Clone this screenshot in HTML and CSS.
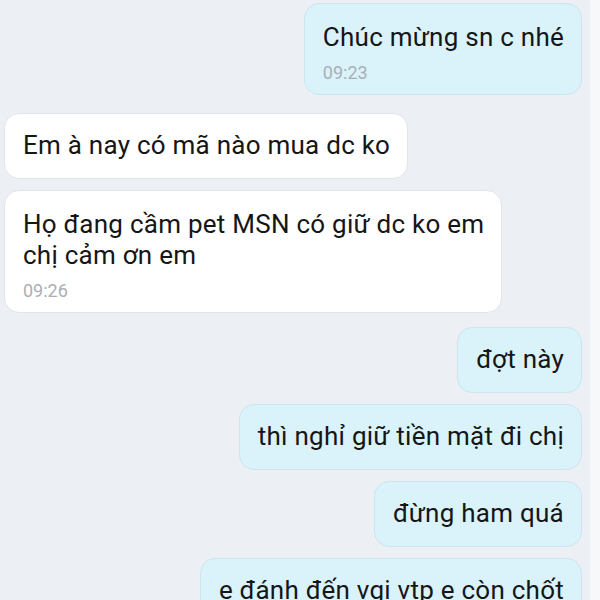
FILE: index.html
```html
<!DOCTYPE html>
<html lang="vi">
<head>
<meta charset="utf-8">
<link rel="stylesheet" href="styles.css">
</head>
<body>
<div class="chat">
  <div class="row out">
    <div class="bubble out">
      <div class="text">Chúc mừng sn c nhé</div>
      <div class="time">09:23</div>
    </div>
  </div>
  <div class="row in gap-l">
    <div class="bubble in single">
      <div class="text">Em à nay có mã nào mua dc ko</div>
    </div>
  </div>
  <div class="row in">
    <div class="bubble in">
      <div class="text">Họ đang cầm pet MSN có giữ dc ko em<br>chị cảm ơn em</div>
      <div class="time">09:26</div>
    </div>
  </div>
  <div class="row out gap-m">
    <div class="bubble out single">
      <div class="text">đợt này</div>
    </div>
  </div>
  <div class="row out">
    <div class="bubble out single">
      <div class="text">thì nghỉ giữ tiền mặt đi chị</div>
    </div>
  </div>
  <div class="row out">
    <div class="bubble out single">
      <div class="text">đừng ham quá</div>
    </div>
  </div>
  <div class="row out">
    <div class="bubble out single">
      <div class="text">e đánh đến vgi vtp e còn chốt</div>
    </div>
  </div>
</div>
</body>
</html>
```
FILE: styles.css
```css
html, body {
  margin: 0;
  padding: 0;
  background: #eceff4;
  height: 600px;
  overflow: hidden;
}
body {
  font-family: Roboto, "Liberation Sans", sans-serif;
  color: #161616;
}
.chat {
  display: flex;
  flex-direction: column;
  gap: 11px;
  padding: 3px 8px 0 4px;
  border-right: 10px solid #f7f8fa;
  height: 600px;
  box-sizing: border-box;
}
.row {
  display: flex;
  flex-shrink: 0;
}
.row.out {
  justify-content: flex-end;
}
.row.in {
  justify-content: flex-start;
}
.row.gap-l {
  margin-top: 7px;
}
.row.gap-m {
  margin-top: 3px;
}
.bubble {
  border-radius: 15px;
  padding: 18px 17px 11px 18px;
  box-sizing: border-box;
}
.bubble.single {
  padding: 16px 17px 17px 18px;
}
.bubble.out {
  background: #daf3fb;
  border: 1px solid #cde5ee;
}
.bubble.in {
  background: #ffffff;
  border: 1px solid #e1e5ea;
}
.text {
  font-size: 26px;
  line-height: 31px;
  letter-spacing: 0.25px;
  white-space: nowrap;
}
.time {
  font-size: 18px;
  color: #a9afb5;
  margin-top: 10px;
  line-height: 20px;
}
```
